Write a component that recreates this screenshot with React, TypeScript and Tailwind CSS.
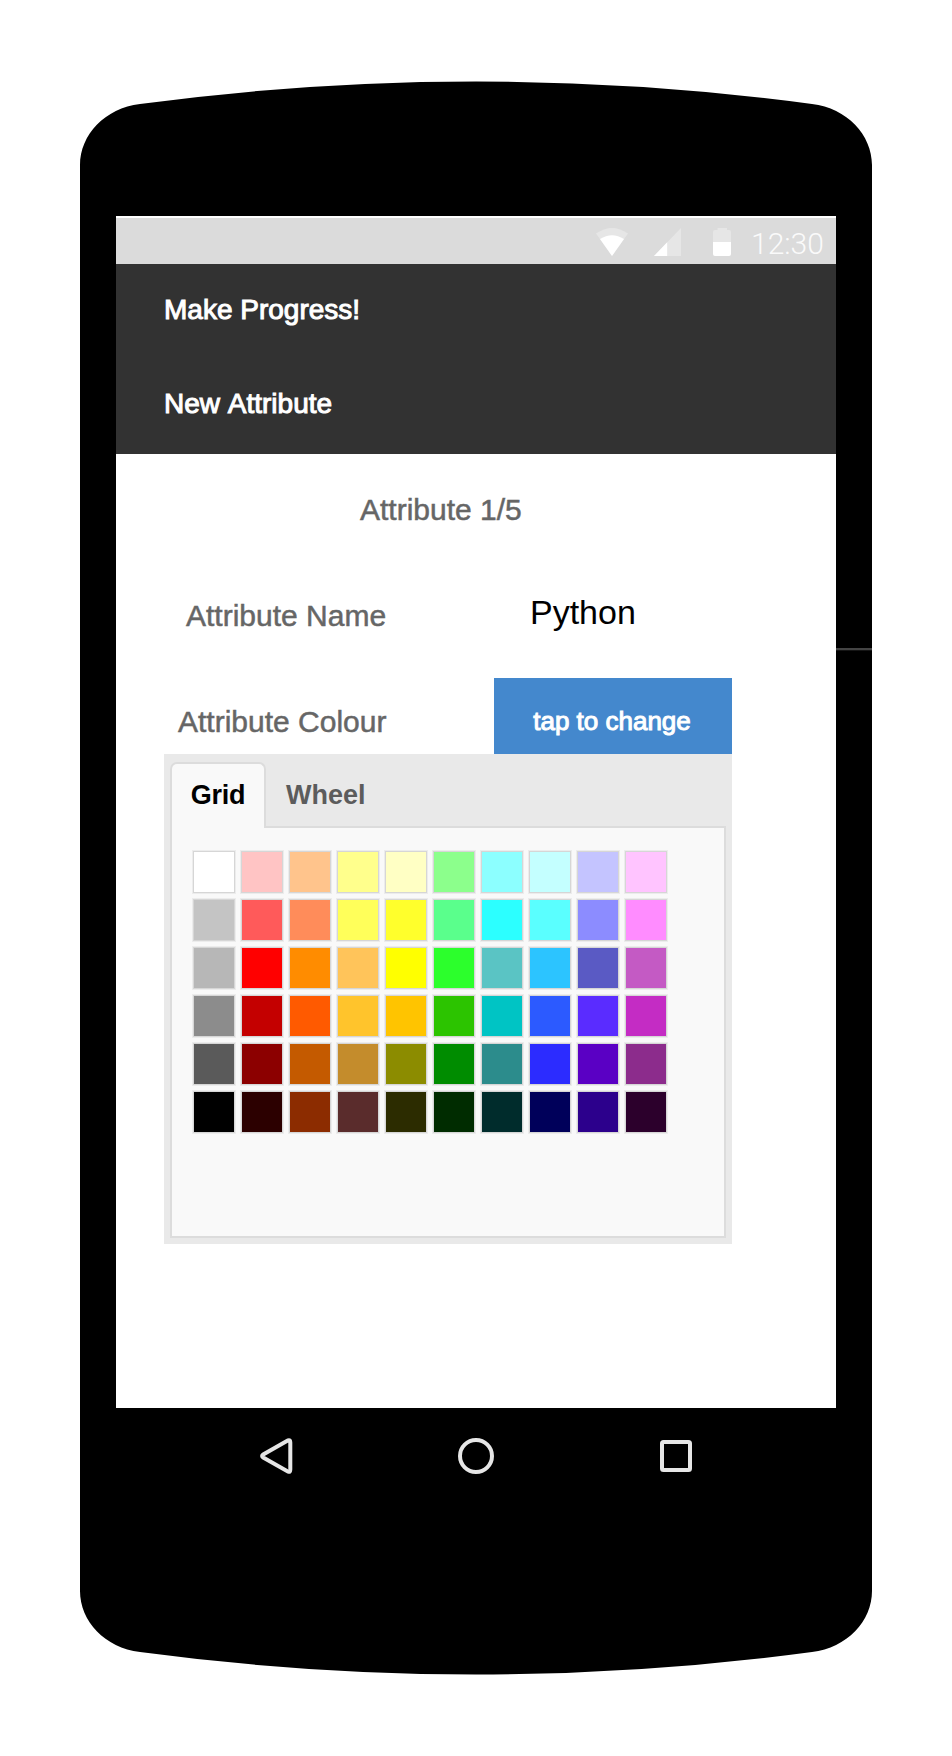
const swatches: string[][] = [
  ["#ffffff", "#ffc4c4", "#ffc48c", "#ffff8c", "#ffffc4", "#8cff8c", "#8cffff", "#c4ffff", "#c4c4ff", "#ffc4ff"],
  ["#c4c4c4", "#ff5a5a", "#ff8c5a", "#ffff5a", "#ffff2c", "#5aff8c", "#2cffff", "#5affff", "#8c8cff", "#ff8cff"],
  ["#b7b7b7", "#ff0000", "#ff8c00", "#ffc45a", "#ffff00", "#2cff2c", "#5ac4c4", "#2cc4ff", "#5a5ac4", "#c45ac4"],
  ["#8c8c8c", "#c40000", "#ff5a00", "#ffc42c", "#ffc400", "#2cc400", "#00c4c4", "#2c5aff", "#5a2cff", "#c42cc4"],
  ["#5a5a5a", "#8c0000", "#c45a00", "#c48c2c", "#8c8c00", "#008c00", "#2c8c8c", "#2c2cff", "#5a00c4", "#8c2c8c"],
  ["#000000", "#2c0000", "#8c2c00", "#5a2c2c", "#2c2c00", "#002c00", "#002c2c", "#00005a", "#2c008c", "#2c002c"],
];

function StatusBar() {
  return (
    <div className="flex h-[46px] items-start bg-[#dbdbdb] pt-[10px] pl-[480px]">
      <svg className="h-[28px] w-[32px]" viewBox="0 0 32 28">
        <path d="M0 5.6 Q16 -5.6 32 5.6 L16 28 Z" fill="#e6e6e6" />
        <path d="M4 11 Q16 3.4 28 11 L16 28 Z" fill="#fff" />
      </svg>
      <svg className="ml-[26px] h-[28px] w-[27px]" viewBox="0 0 27 28">
        <path d="M0 28 L27 0 V28 Z" fill="#e6e6e6" />
        <path d="M0 28 L13.2 14.3 V28 Z" fill="#fff" />
      </svg>
      <svg className="ml-[32px] h-[28px] w-[18px]" viewBox="0 0 18 28">
        <path d="M2 2 H4.5 V0 H14 V2 H16 Q18 2 18 4 V14 H0 V4 Q0 2 2 2 Z" fill="#e6e6e6" />
        <path d="M0 14 H18 V26 Q18 28 16 28 H2 Q0 28 0 26 Z" fill="#fff" />
      </svg>
      <span className="ml-[20px] font-[Roboto,sans-serif] text-[30px] leading-[32px] font-light text-[#fafafa]">
        12:30
      </span>
    </div>
  );
}

function Header() {
  return (
    <header className="h-[190px] bg-[#323232] pl-[48px] text-[28px] text-white [-webkit-text-stroke:1px_white]">
      <h1 className="flex h-[93px] items-center pb-[1px]">Make Progress!</h1>
      <h2 className="flex h-[95px] items-center pb-[1px] [font-kerning:none]">New Attribute</h2>
    </header>
  );
}

function ColourPicker() {
  return (
    <section className="ml-[48px] flex h-[490px] w-[568px] flex-col bg-[#e9e9e9] px-[6px] pt-[8px] pb-[6px]">
      <div className="flex h-[64px] shrink-0 text-[27px] font-bold">
        <button className="relative z-10 -mb-[2px] w-[96px] rounded-t-[7px] border-2 border-b-0 border-[#dcdcdc] bg-[#f9f9f9] pb-[2px] text-center tracking-[-0.3px] text-black">
          Grid
        </button>
        <button className="pt-[2px] pl-[20px] text-[#5c5c5c]">Wheel</button>
      </div>
      <div className="flex-1 border-2 border-[#dcdcdc] bg-[#f9f9f9] pt-[23px] pl-[21px]">
        <div className="grid w-max grid-cols-10 gap-[6px]">
          {swatches.flat().map((colour) => (
            <div
              key={colour}
              className="h-[42px] w-[42px] border border-[#d6d6d6] shadow-[0_0_0_1px_#ececec]"
              style={{ backgroundColor: colour }}
            />
          ))}
        </div>
      </div>
    </section>
  );
}

function NavigationBar() {
  return (
    <nav className="flex h-[96px] items-center bg-black pl-[180px]">
      <svg className="h-[36px] w-[34px]" viewBox="0 0 34 36" fill="none" stroke="#e6e6e6" strokeWidth="4">
        <path d="M28.2 2.3 L3.2 16.5 Q1 18 3.2 19.5 L28.2 33.7 Q30.3 34.4 30.3 31.5 V4.5 Q30.3 1.6 28.2 2.3 Z" />
      </svg>
      <svg className="ml-[164px] h-[36px] w-[36px]" viewBox="0 0 36 36" fill="none" stroke="#e6e6e6" strokeWidth="4">
        <circle cx="18" cy="18" r="16" />
      </svg>
      <svg className="ml-[166px] h-[32px] w-[32px]" viewBox="0 0 32 32" fill="none" stroke="#e6e6e6" strokeWidth="4">
        <rect x="2" y="2" width="28" height="28" rx="1.5" />
      </svg>
    </nav>
  );
}

export default function App() {
  return (
    <div className="flex h-[1756px] w-[952px] flex-col items-center bg-white pt-[81px] font-['Liberation_Sans',Arial,sans-serif]">
      <div className="flex w-[792px] flex-col">
        <svg className="block h-[135px] w-[792px]" viewBox="0 0 792 135">
          <path d="M0 135 V84 C0 54 25 27 60 23 Q396 -22 732 23 C767 27 792 54 792 84 V135 Z" />
        </svg>
        <div className="flex h-[1192px] bg-black pl-[36px]">
          <main className="w-[720px] bg-white pt-[2px]">
            <StatusBar />
            <Header />
            <div className="text-[30px] text-[#666] [-webkit-text-stroke:0.5px_#666]">
              <div className="flex h-[111px] items-center pb-[1px] pl-[244px]">Attribute 1/5</div>
              <div className="mb-[12px] flex h-[101px] items-center pb-[1px] pl-[70px]">
                <label className="w-[344px]">Attribute Name</label>
                <span className="pb-[6px] text-[34px] text-black [-webkit-text-stroke:0]">Python</span>
              </div>
              <div className="flex h-[76px] pl-[62px]">
                <label className="flex w-[316px] items-center pt-[10px]">Attribute Colour</label>
                <button className="flex w-[238px] items-center justify-center bg-[#4488cd] pt-[10px] pr-[2px] text-[26px] text-white [-webkit-text-stroke:1px_white]">
                  tap to change
                </button>
              </div>
            </div>
            <ColourPicker />
          </main>
          <div className="w-[36px] pt-[432px]">
            <div className="h-[2px] bg-[#444]" />
            <div className="h-px bg-[#151515]" />
          </div>
        </div>
        <NavigationBar />
        <svg className="block h-[171px] w-[792px]" viewBox="0 0 792 171">
          <path d="M0 0 V87 C0 117 25 144 60 148 Q396 193 732 148 C767 144 792 117 792 87 V0 Z" />
        </svg>
      </div>
    </div>
  );
}
